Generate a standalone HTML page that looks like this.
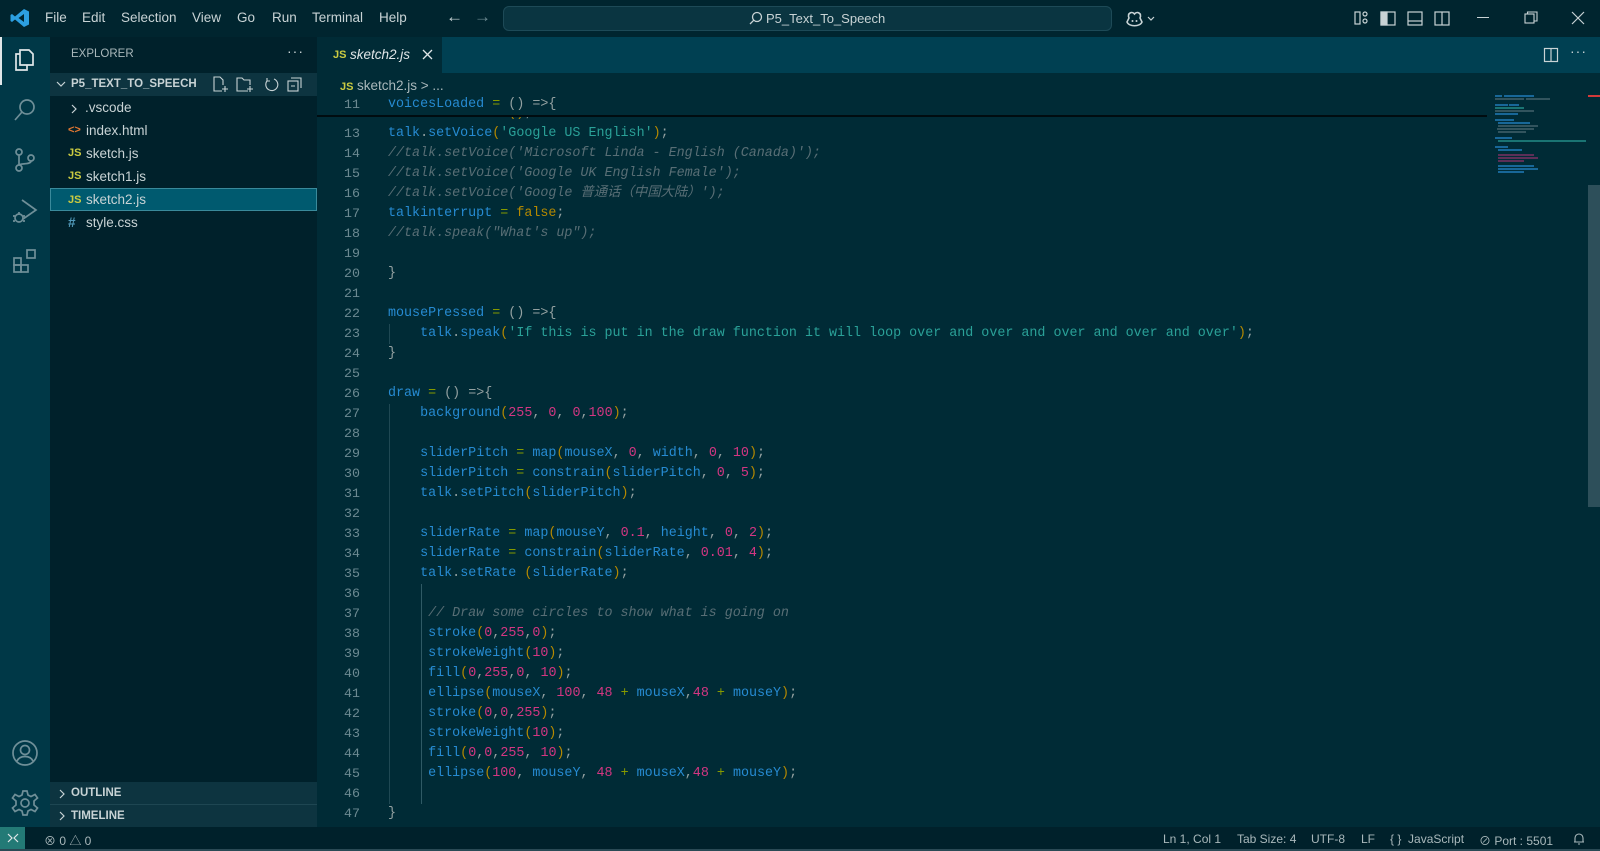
<!DOCTYPE html>
<html><head><meta charset="utf-8"><style>
*{margin:0;padding:0;box-sizing:border-box}
body{width:1600px;height:851px;overflow:hidden;background:#002b36;font-family:"Liberation Sans","Noto Sans CJK SC",sans-serif;font-size:13px;color:#93a1a1;position:relative}
.abs{position:absolute}
#title{left:0;top:0;width:1600px;height:37px;background:#00252f}
.menu{top:10px;color:#c8d3d5;font-size:13.5px}
#act{left:0;top:37px;width:50px;height:790px;background:#003847}
#side{left:50px;top:37px;width:267px;height:790px;background:#00212b}
#tabs{left:317px;top:37px;width:1283px;height:36px;background:#004052}
#tab{left:317px;top:37px;width:125px;height:36px;background:#002b36}
.js{color:#cbcb41;font-weight:bold;font-size:11px}
.row{position:absolute;left:50px;width:267px;height:23px;line-height:23px;color:#c8d3d5;font-size:13.5px}
#code{left:317px;top:73px;width:1170px;height:754px;overflow:hidden}
.ln{position:absolute;left:0;width:43px;text-align:right;color:#6c8a92;font-family:"Liberation Mono",monospace;font-size:13.3px;line-height:20px}
.cl{position:absolute;left:71px;white-space:pre;font-family:"Liberation Mono","Noto Sans CJK SC",monospace;font-size:13.37px;line-height:20px;color:#93a1a1}
.v{color:#268bd2}.o{color:#859900}.p{color:#b58900}.n{color:#d33682}.s{color:#2aa198}.c{color:#586e75;font-style:italic}
#status{left:0;top:827px;width:1600px;height:22px;background:#00212b;color:#a9b8bb;font-size:12px}
.st{position:absolute;top:5px}
svg{position:absolute}
</style></head><body>
<div id="title" class="abs"></div>
<svg style="left:10px;top:8px" width="20" height="20" viewBox="0 0 20 20"><path d="M14 1 L19 3.5 V16.5 L14 19 L5 11.5 L2 14 L0.5 13 V7 L2 6 L5 8.5 Z M14 6 L8.5 10 L14 14 Z" fill="#2c9fe0"/></svg>
<div class="abs menu" style="left:45px">File</div>
<div class="abs menu" style="left:82px">Edit</div>
<div class="abs menu" style="left:121px">Selection</div>
<div class="abs menu" style="left:192px">View</div>
<div class="abs menu" style="left:237px">Go</div>
<div class="abs menu" style="left:272px">Run</div>
<div class="abs menu" style="left:312px">Terminal</div>
<div class="abs menu" style="left:379px">Help</div>
<div class="abs menu" style="left:446px;top:7px;font-size:17px">&#8592;</div>
<div class="abs menu" style="left:474px;top:7px;font-size:17px;color:#6c8a92">&#8594;</div>
<div class="abs" style="left:503px;top:6px;width:609px;height:25px;border:1px solid #1d4a57;background:#0a3541;border-radius:6px"></div>
<svg style="left:749px;top:11px" width="14" height="14" viewBox="0 0 14 14"><circle cx="8" cy="6" r="4.5" fill="none" stroke="#c8d3d5" stroke-width="1.3"/><path d="M4.8 9.2 L1 13" stroke="#c8d3d5" stroke-width="1.3"/></svg>
<div class="abs" style="left:766px;top:11px;color:#c8d3d5;font-size:13px">P5_Text_To_Speech</div>
<svg style="left:1126px;top:10px" width="34" height="18" viewBox="0 0 34 18"><path d="M3 8 C1 3 6 1 8.5 4 C11 1 16 3 14 8 L16 12 C14 17 3 17 1 12 Z" fill="none" stroke="#c8d3d5" stroke-width="1.6"/><circle cx="6.5" cy="11" r="1" fill="#c8d3d5"/><circle cx="10.5" cy="11" r="1" fill="#c8d3d5"/><path d="M22 7 L25 10 L28 7" fill="none" stroke="#c8d3d5" stroke-width="1.2"/></svg>
<svg style="left:1354px;top:10px" width="100" height="17" viewBox="0 0 100 17" fill="none" stroke="#c8d3d5" stroke-width="1.2"><rect x="1" y="2" width="5" height="12"/><rect x="9" y="2" width="4" height="4" rx="2"/><rect x="9" y="9" width="4" height="4" rx="2"/><rect x="27" y="2" width="14" height="13"/><rect x="27" y="2" width="6" height="13" fill="#c8d3d5"/><rect x="54" y="2" width="14" height="13"/><path d="M54 11 H68"/><rect x="81" y="2" width="14" height="13"/><path d="M88 2 V15"/></svg>
<div class="abs" style="left:1477px;top:17px;width:12px;height:1px;background:#c8d3d5"></div>
<svg style="left:1524px;top:11px" width="14" height="14" viewBox="0 0 14 14" fill="none" stroke="#c8d3d5" stroke-width="1.1"><rect x="1" y="3" width="9" height="9"/><path d="M3.5 3 V1 H13 V10 H10"/></svg>
<svg style="left:1571px;top:11px" width="14" height="14" viewBox="0 0 14 14" stroke="#c8d3d5" stroke-width="1.2"><path d="M1 1 L13 13 M13 1 L1 13"/></svg>

<div id="act" class="abs"></div>
<div class="abs" style="left:0;top:37px;width:2px;height:48px;background:#e0e6e8"></div>
<svg style="left:12px;top:46px" width="26" height="26" viewBox="0 0 26 26" fill="none" stroke="#dfe6e8" stroke-width="1.7"><path d="M8 4 H17 L21 8 V19 H8 Z"/><path d="M8 8 H4 V24 H15 V19"/></svg>
<svg style="left:12px;top:97px" width="26" height="26" viewBox="0 0 26 26" fill="none" stroke="#6f8f98" stroke-width="1.7"><circle cx="15" cy="10" r="7"/><path d="M10 15 L3 23"/></svg>
<svg style="left:12px;top:147px" width="26" height="26" viewBox="0 0 26 26" fill="none" stroke="#6f8f98" stroke-width="1.7"><circle cx="7" cy="5" r="3"/><circle cx="7" cy="21" r="3"/><circle cx="19" cy="11" r="3"/><path d="M7 8 V18 M19 14 C19 18 8 16 7 18"/></svg>
<svg style="left:11px;top:197px" width="28" height="28" viewBox="0 0 28 28" fill="none" stroke="#6f8f98" stroke-width="1.7"><path d="M11 3 L25 13 L12 22"/><circle cx="8" cy="21" r="4"/><path d="M2 19 H4 M2 24 H4 M12 19 H14 M12 24 H14 M8 15 V17"/></svg>
<svg style="left:12px;top:248px" width="26" height="26" viewBox="0 0 26 26" fill="none" stroke="#6f8f98" stroke-width="1.7"><rect x="2" y="10" width="7" height="7"/><rect x="2" y="17" width="7" height="7"/><rect x="9" y="17" width="7" height="7"/><rect x="15" y="2" width="8" height="8"/></svg>
<svg style="left:11px;top:739px" width="28" height="28" viewBox="0 0 28 28" fill="none" stroke="#6f8f98" stroke-width="1.7"><circle cx="14" cy="14" r="12"/><circle cx="14" cy="11" r="4.5"/><path d="M6 22 C9 16 19 16 22 22"/></svg>
<svg style="left:11px;top:789px" width="28" height="28" viewBox="0 0 28 28" fill="none" stroke="#6f8f98" stroke-width="1.7"><circle cx="14" cy="14" r="4"/><path d="M12 2 H16 L17 6 L20 7.5 L24 5.5 L26.5 9 L23 12 V16 L26.5 19 L24 22.5 L20 20.5 L17 22 L16 26 H12 L11 22 L8 20.5 L4 22.5 L1.5 19 L5 16 V12 L1.5 9 L4 5.5 L8 7.5 L11 6 Z"/></svg>

<div id="side" class="abs"></div>
<div class="abs" style="left:71px;top:48px;font-size:11.5px;color:#a9b8bb">EXPLORER</div>
<div class="abs" style="left:287px;top:43px;font-size:14px;color:#c8d3d5;letter-spacing:1px">···</div>
<div class="abs" style="left:50px;top:73px;width:267px;height:23px;background:#0d3440"></div>
<svg style="left:56px;top:80px" width="10" height="8" viewBox="0 0 10 8" fill="none" stroke="#c8d3d5" stroke-width="1.2"><path d="M1 2 L5 6 L9 2"/></svg>
<div class="abs" style="left:71px;top:78px;font-size:11.5px;font-weight:bold;color:#c8d3d5">P5_TEXT_TO_SPEECH</div>
<svg style="left:212px;top:76px" width="92" height="18" viewBox="0 0 92 18" fill="none" stroke="#c8d3d5" stroke-width="1.1"><path d="M10 15 H2 V1 H8 L11 4 V9 M13 10 V16 M10 13 H16"/><path d="M36 15 H25 V2 H30 L32 4 H38 V9 M38 10 V16 M35 13 H41"/><path d="M62 3 A6 6 0 1 1 55 5 M55 2 V5 H58"/><rect x="76" y="5" width="10" height="10"/><path d="M79 2 H89 V12 M79 10 H83"/></svg>
<div class="row" style="top:96px"><svg style="left:21px;top:8px" width="6" height="10" viewBox="0 0 6 10" fill="none" stroke="#c8d3d5" stroke-width="1.2"><path d="M1 1 L5 5 L1 9"/></svg><span class="abs" style="left:35px">.vscode</span></div>
<div class="row" style="top:119px"><span class="abs" style="left:18px;color:#e37933;font-size:11px;font-weight:bold">&lt;&gt;</span><span class="abs" style="left:36px">index.html</span></div>
<div class="row" style="top:142px"><span class="abs js" style="left:18px">JS</span><span class="abs" style="left:36px">sketch.js</span></div>
<div class="row" style="top:165px"><span class="abs js" style="left:18px">JS</span><span class="abs" style="left:36px">sketch1.js</span></div>
<div class="row" style="top:188px;background:#005a6f;border:1px solid #3a8a9b"><span class="abs js" style="left:17px">JS</span><span class="abs" style="left:35px;top:-1px">sketch2.js</span></div>
<div class="row" style="top:211px"><span class="abs" style="left:18px;color:#519aba;font-weight:bold">#</span><span class="abs" style="left:36px">style.css</span></div>
<div class="abs" style="left:50px;top:782px;width:267px;height:45px;background:#0d3440"></div>
<svg style="left:59px;top:789px" width="6" height="10" viewBox="0 0 6 10" fill="none" stroke="#c8d3d5" stroke-width="1.2"><path d="M1 1 L5 5 L1 9"/></svg>
<div class="abs" style="left:71px;top:787px;font-size:11.5px;font-weight:bold;color:#c8d3d5">OUTLINE</div>
<div class="abs" style="left:50px;top:804px;width:267px;height:1px;background:#1e4652"></div>
<svg style="left:59px;top:811px" width="6" height="10" viewBox="0 0 6 10" fill="none" stroke="#c8d3d5" stroke-width="1.2"><path d="M1 1 L5 5 L1 9"/></svg>
<div class="abs" style="left:71px;top:810px;font-size:11.5px;font-weight:bold;color:#c8d3d5">TIMELINE</div>

<div id="tabs" class="abs"></div>
<div id="tab" class="abs"></div>
<div class="abs js" style="left:333px;top:49px">JS</div>
<div class="abs" style="left:350px;top:47px;font-style:italic;color:#e0e6e8;font-size:13.5px">sketch2.js</div>
<svg style="left:422px;top:49px" width="11" height="11" viewBox="0 0 11 11" stroke="#e0e6e8" stroke-width="1.3"><path d="M1 1 L10 10 M10 1 L1 10"/></svg>
<svg style="left:1543px;top:47px" width="16" height="16" viewBox="0 0 16 16" fill="none" stroke="#c8d3d5" stroke-width="1.2"><rect x="1.5" y="1.5" width="13" height="13"/><path d="M8 1.5 V14.5"/></svg>
<div class="abs" style="left:1570px;top:43px;font-size:14px;color:#c8d3d5;letter-spacing:1px">···</div>
<div class="abs js" style="left:340px;top:81px">JS</div>
<div class="abs" style="left:357px;top:78px;color:#a9b8bb;font-size:13.5px">sketch2.js &gt; ...</div>

<div id="code" class="abs">
<div class="abs" style="left:72px;top:331px;width:1px;height:400px;background:#1f4853"></div>
<div class="abs" style="left:104px;top:511px;width:1px;height:220px;background:#2f5a65"></div>
<div class="abs" style="left:72px;top:251px;width:1px;height:20px;background:#1f4853"></div>
<div class="ln" style="top:31px">12</div><div class="cl" style="top:31px"><span class="v">talk</span>.<span class="v">listVoices</span><span class="p">()</span>;</div>
<div class="ln" style="top:51px">13</div><div class="cl" style="top:51px"><span class="v">talk</span>.<span class="v">setVoice</span><span class="p">(</span><span class="s">'Google US English'</span><span class="p">)</span>;</div>
<div class="ln" style="top:71px">14</div><div class="cl c" style="top:71px">//talk.setVoice('Microsoft Linda - English (Canada)');</div>
<div class="ln" style="top:91px">15</div><div class="cl c" style="top:91px">//talk.setVoice('Google UK English Female');</div>
<div class="ln" style="top:111px">16</div><div class="cl c" style="top:111px">//talk.setVoice('Google 普通话（中国大陆）');</div>
<div class="ln" style="top:131px">17</div><div class="cl" style="top:131px"><span class="v">talkinterrupt</span> <span class="o">=</span> <span class="p">false</span>;</div>
<div class="ln" style="top:151px">18</div><div class="cl c" style="top:151px">//talk.speak("What's up");</div>
<div class="ln" style="top:171px">19</div>
<div class="ln" style="top:191px">20</div><div class="cl" style="top:191px">}</div>
<div class="ln" style="top:211px">21</div>
<div class="ln" style="top:231px">22</div><div class="cl" style="top:231px"><span class="v">mousePressed</span> <span class="o">=</span> () =&gt;{</div>
<div class="ln" style="top:251px">23</div><div class="cl" style="top:251px">    <span class="v">talk</span>.<span class="v">speak</span><span class="p">(</span><span class="s">'If this is put in the draw function it will loop over and over and over and over and over'</span><span class="p">)</span>;</div>
<div class="ln" style="top:271px">24</div><div class="cl" style="top:271px">}</div>
<div class="ln" style="top:291px">25</div>
<div class="ln" style="top:311px">26</div><div class="cl" style="top:311px"><span class="v">draw</span> <span class="o">=</span> () =&gt;{</div>
<div class="ln" style="top:331px">27</div><div class="cl" style="top:331px">    <span class="v">background</span><span class="p">(</span><span class="n">255</span>, <span class="n">0</span>, <span class="n">0</span>,<span class="n">100</span><span class="p">)</span>;</div>
<div class="ln" style="top:351px">28</div>
<div class="ln" style="top:371px">29</div><div class="cl" style="top:371px">    <span class="v">sliderPitch</span> <span class="o">=</span> <span class="v">map</span><span class="p">(</span><span class="v">mouseX</span>, <span class="n">0</span>, <span class="v">width</span>, <span class="n">0</span>, <span class="n">10</span><span class="p">)</span>;</div>
<div class="ln" style="top:391px">30</div><div class="cl" style="top:391px">    <span class="v">sliderPitch</span> <span class="o">=</span> <span class="v">constrain</span><span class="p">(</span><span class="v">sliderPitch</span>, <span class="n">0</span>, <span class="n">5</span><span class="p">)</span>;</div>
<div class="ln" style="top:411px">31</div><div class="cl" style="top:411px">    <span class="v">talk</span>.<span class="v">setPitch</span><span class="p">(</span><span class="v">sliderPitch</span><span class="p">)</span>;</div>
<div class="ln" style="top:431px">32</div>
<div class="ln" style="top:451px">33</div><div class="cl" style="top:451px">    <span class="v">sliderRate</span> <span class="o">=</span> <span class="v">map</span><span class="p">(</span><span class="v">mouseY</span>, <span class="n">0.1</span>, <span class="v">height</span>, <span class="n">0</span>, <span class="n">2</span><span class="p">)</span>;</div>
<div class="ln" style="top:471px">34</div><div class="cl" style="top:471px">    <span class="v">sliderRate</span> <span class="o">=</span> <span class="v">constrain</span><span class="p">(</span><span class="v">sliderRate</span>, <span class="n">0.01</span>, <span class="n">4</span><span class="p">)</span>;</div>
<div class="ln" style="top:491px">35</div><div class="cl" style="top:491px">    <span class="v">talk</span>.<span class="v">setRate</span> <span class="p">(</span><span class="v">sliderRate</span><span class="p">)</span>;</div>
<div class="ln" style="top:511px">36</div>
<div class="ln" style="top:531px">37</div><div class="cl c" style="top:531px">     // Draw some circles to show what is going on</div>
<div class="ln" style="top:551px">38</div><div class="cl" style="top:551px">     <span class="v">stroke</span><span class="p">(</span><span class="n">0</span>,<span class="n">255</span>,<span class="n">0</span><span class="p">)</span>;</div>
<div class="ln" style="top:571px">39</div><div class="cl" style="top:571px">     <span class="v">strokeWeight</span><span class="p">(</span><span class="n">10</span><span class="p">)</span>;</div>
<div class="ln" style="top:591px">40</div><div class="cl" style="top:591px">     <span class="v">fill</span><span class="p">(</span><span class="n">0</span>,<span class="n">255</span>,<span class="n">0</span>, <span class="n">10</span><span class="p">)</span>;</div>
<div class="ln" style="top:611px">41</div><div class="cl" style="top:611px">     <span class="v">ellipse</span><span class="p">(</span><span class="v">mouseX</span>, <span class="n">100</span>, <span class="n">48</span> <span class="o">+</span> <span class="v">mouseX</span>,<span class="n">48</span> <span class="o">+</span> <span class="v">mouseY</span><span class="p">)</span>;</div>
<div class="ln" style="top:631px">42</div><div class="cl" style="top:631px">     <span class="v">stroke</span><span class="p">(</span><span class="n">0</span>,<span class="n">0</span>,<span class="n">255</span><span class="p">)</span>;</div>
<div class="ln" style="top:651px">43</div><div class="cl" style="top:651px">     <span class="v">strokeWeight</span><span class="p">(</span><span class="n">10</span><span class="p">)</span>;</div>
<div class="ln" style="top:671px">44</div><div class="cl" style="top:671px">     <span class="v">fill</span><span class="p">(</span><span class="n">0</span>,<span class="n">0</span>,<span class="n">255</span>, <span class="n">10</span><span class="p">)</span>;</div>
<div class="ln" style="top:691px">45</div><div class="cl" style="top:691px">     <span class="v">ellipse</span><span class="p">(</span><span class="n">100</span>, <span class="v">mouseY</span>, <span class="n">48</span> <span class="o">+</span> <span class="v">mouseX</span>,<span class="n">48</span> <span class="o">+</span> <span class="v">mouseY</span><span class="p">)</span>;</div>
<div class="ln" style="top:711px">46</div>
<div class="ln" style="top:731px">47</div><div class="cl" style="top:731px">}</div>
<div class="ln" style="top:751px">48</div>
<div class="abs" style="left:0;top:21px;width:1170px;height:22px;background:#002b36"></div>
<div class="abs" style="left:0;top:42px;width:1170px;height:2px;background:#000c10"></div>
<div class="ln" style="top:22px">11</div><div class="cl" style="top:22px"><span class="v">voicesLoaded</span> <span class="o">=</span> () =&gt;{</div>
</div>
<svg style="left:1494px;top:95px" width="92" height="80" viewBox="0 0 92 80">
<g stroke-width="1.2"><path d="M1 1 H8 M10 1 H40" stroke="#268bd2"/><path d="M1 4 H30 M32 4 H56" stroke="#4f6e76"/><path d="M1 10 H14 M15 10 H25" stroke="#268bd2"/><path d="M1 13 H30" stroke="#2aa198"/><path d="M1 16 H40" stroke="#4f6e76"/><path d="M1 19 H24" stroke="#268bd2"/><path d="M1 25 H20 M4 28 H36" stroke="#268bd2"/><path d="M4 31 H44 M3 34 H40 M4 37 H32" stroke="#4f6e76"/><path d="M1 43 H18" stroke="#268bd2"/><path d="M4 46 H92" stroke="#2aa198"/><path d="M1 52 H14 M4 55 H28" stroke="#268bd2"/><path d="M4 60 H40 M4 63 H44 M4 66 H30" stroke="#d33682" opacity=".7"/><path d="M4 71 H40 M4 74 H44 M4 77 H30" stroke="#268bd2"/></g></svg>
<div class="abs" style="left:1588px;top:95px;width:12px;height:2px;background:#d33a3a"></div>
<div class="abs" style="left:1588px;top:185px;width:12px;height:322px;background:#2d4f5a"></div>

<div id="status" class="abs">
<div class="abs" style="left:0;top:0;width:25px;height:22px;background:#237a76"></div>
<svg style="left:7px;top:5px" width="12" height="12" viewBox="0 0 12 12" fill="none" stroke="#e0e6e8" stroke-width="1.2"><path d="M1 2 L5 6 L1 10 M11 2 L7 6 L11 10"/></svg>
<div class="st" style="left:44px">&#8855; 0 &#9651; 0</div>
<div class="st" style="left:1163px">Ln 1, Col 1</div>
<div class="st" style="left:1237px">Tab Size: 4</div>
<div class="st" style="left:1311px">UTF-8</div>
<div class="st" style="left:1361px">LF</div>
<div class="st" style="left:1390px">{ }&nbsp; JavaScript</div>
<div class="st" style="left:1479px">&#8856; Port : 5501</div>
<svg style="left:1573px;top:5px" width="12" height="13" viewBox="0 0 12 13" fill="none" stroke="#a9b8bb" stroke-width="1.1"><path d="M2 10 V6 A4 4 0 0 1 10 6 V10 Z M1 10 H11 M5 12 H7"/></svg>
</div>
<div class="abs" style="left:0;top:849px;width:1600px;height:2px;background:#2a4a55"></div>
</body></html>
